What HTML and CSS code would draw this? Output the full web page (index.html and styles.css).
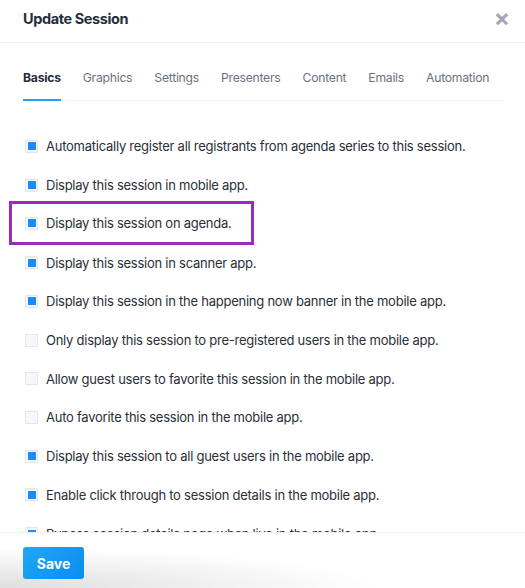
FILE: index.html
```html
<!DOCTYPE html>
<html lang="en">
<head>
  <meta charset="UTF-8">
  <title>Update Session</title>
  <link rel="stylesheet" href="styles.css">
</head>
<body>

  <div class="modal">
    <div class="modal-head">
      <h2>Update Session</h2>
      <span class="close">&times;</span>
    </div>

    <div class="tabs">
      <span class="tab active">Basics</span>
      <span class="tab">Graphics</span>
      <span class="tab">Settings</span>
      <span class="tab">Presenters</span>
      <span class="tab">Content</span>
      <span class="tab">Emails</span>
      <span class="tab">Automation</span>
    </div>

    <div class="options">
      <label class="opt"><span class="box on"></span>Automatically register all registrants from agenda series to this session.</label>
      <label class="opt"><span class="box on"></span>Display this session in mobile app.</label>
      <label class="opt marked"><span class="box on"></span>Display this session on agenda.</label>
      <label class="opt"><span class="box on"></span>Display this session in scanner app.</label>
      <label class="opt"><span class="box on"></span>Display this session in the happening now banner in the mobile app.</label>
      <label class="opt"><span class="box"></span>Only display this session to pre-registered users in the mobile app.</label>
      <label class="opt"><span class="box"></span>Allow guest users to favorite this session in the mobile app.</label>
      <label class="opt"><span class="box"></span>Auto favorite this session in the mobile app.</label>
      <label class="opt"><span class="box on"></span>Display this session to all guest users in the mobile app.</label>
      <label class="opt"><span class="box on"></span>Enable click through to session details in the mobile app.</label>
      <label class="opt"><span class="box on"></span>Bypass session details page when live in the mobile app.</label>
    </div>

    <div class="modal-foot">
      <button class="save">Save</button>
    </div>
  </div>

</body>
</html>
```

FILE: styles.css
```css
body { margin: 0; font-family: Inter, "Open Sans", sans-serif; background: #fff; color: #2a2f38; }
.modal { width: 525px; height: 588px; display: flex; flex-direction: column; overflow: hidden; background: white; }
.modal-head { height: 43px; flex: none; display: flex; align-items: center; justify-content: space-between; padding: 0 15px 6px 23px; box-sizing: border-box; border-bottom: 1px solid #eceef1; }
.modal-head h2 { margin: 0; font-size: 14.5px; font-weight: 700; color: #262d3a; letter-spacing: -0.4px; }
.close { font-size: 24px; color: #a3a9b4; font-weight: 700; line-height: 1; }
.tabs { flex: none; display: flex; gap: 22px; margin: 24px 20px 0 23px; border-bottom: 1px solid #eef0f3; }
.tab { font-size: 12.2px; letter-spacing: -0.25px; color: #6a7280; padding: 3px 0 14px; border-bottom: 2px solid transparent; margin-bottom: -1px; }
.tab.active { color: #262d3a; font-weight: 700; border-bottom-color: #23a0f5; }
.options { flex: 1; min-height: 0; overflow: hidden; padding: 26px 0 0 9px; display: flex; flex-direction: column; }
.opt { display: flex; align-items: center; height: 38.7px; padding-left: 16px; font-size: 13px; letter-spacing: -0.25px; color: #2a2f38; flex: none; box-sizing: border-box; width: 245px; white-space: nowrap; }
.opt .box { width: 11px; height: 11px; border: 1px solid #e4e6ea; background: #f7f8f9; margin-right: 8px; display: flex; align-items: center; justify-content: center; flex: none; }
.opt .box.on::after { content: ""; width: 8px; height: 8px; background: #1a8cff; }
.opt.marked { border: 3px solid #9a2bbf; padding-left: 13px; height: 44px; margin: -3px 0 -2px; }
.modal-foot { height: 56px; box-sizing: border-box; flex: none; border-top: 1px solid #f0f1f3; padding: 14px 23px 0; background: radial-gradient(ellipse 380px 40px at 0 100%, rgba(0,0,0,0.13), rgba(0,0,0,0) 100%); }
.save { width: 61px; height: 32px; border: 0; border-radius: 3px; background: linear-gradient(135deg, #21a7f4, #0a8cf0); color: white; font-family: inherit; font-weight: 700; font-size: 14px; }
```
